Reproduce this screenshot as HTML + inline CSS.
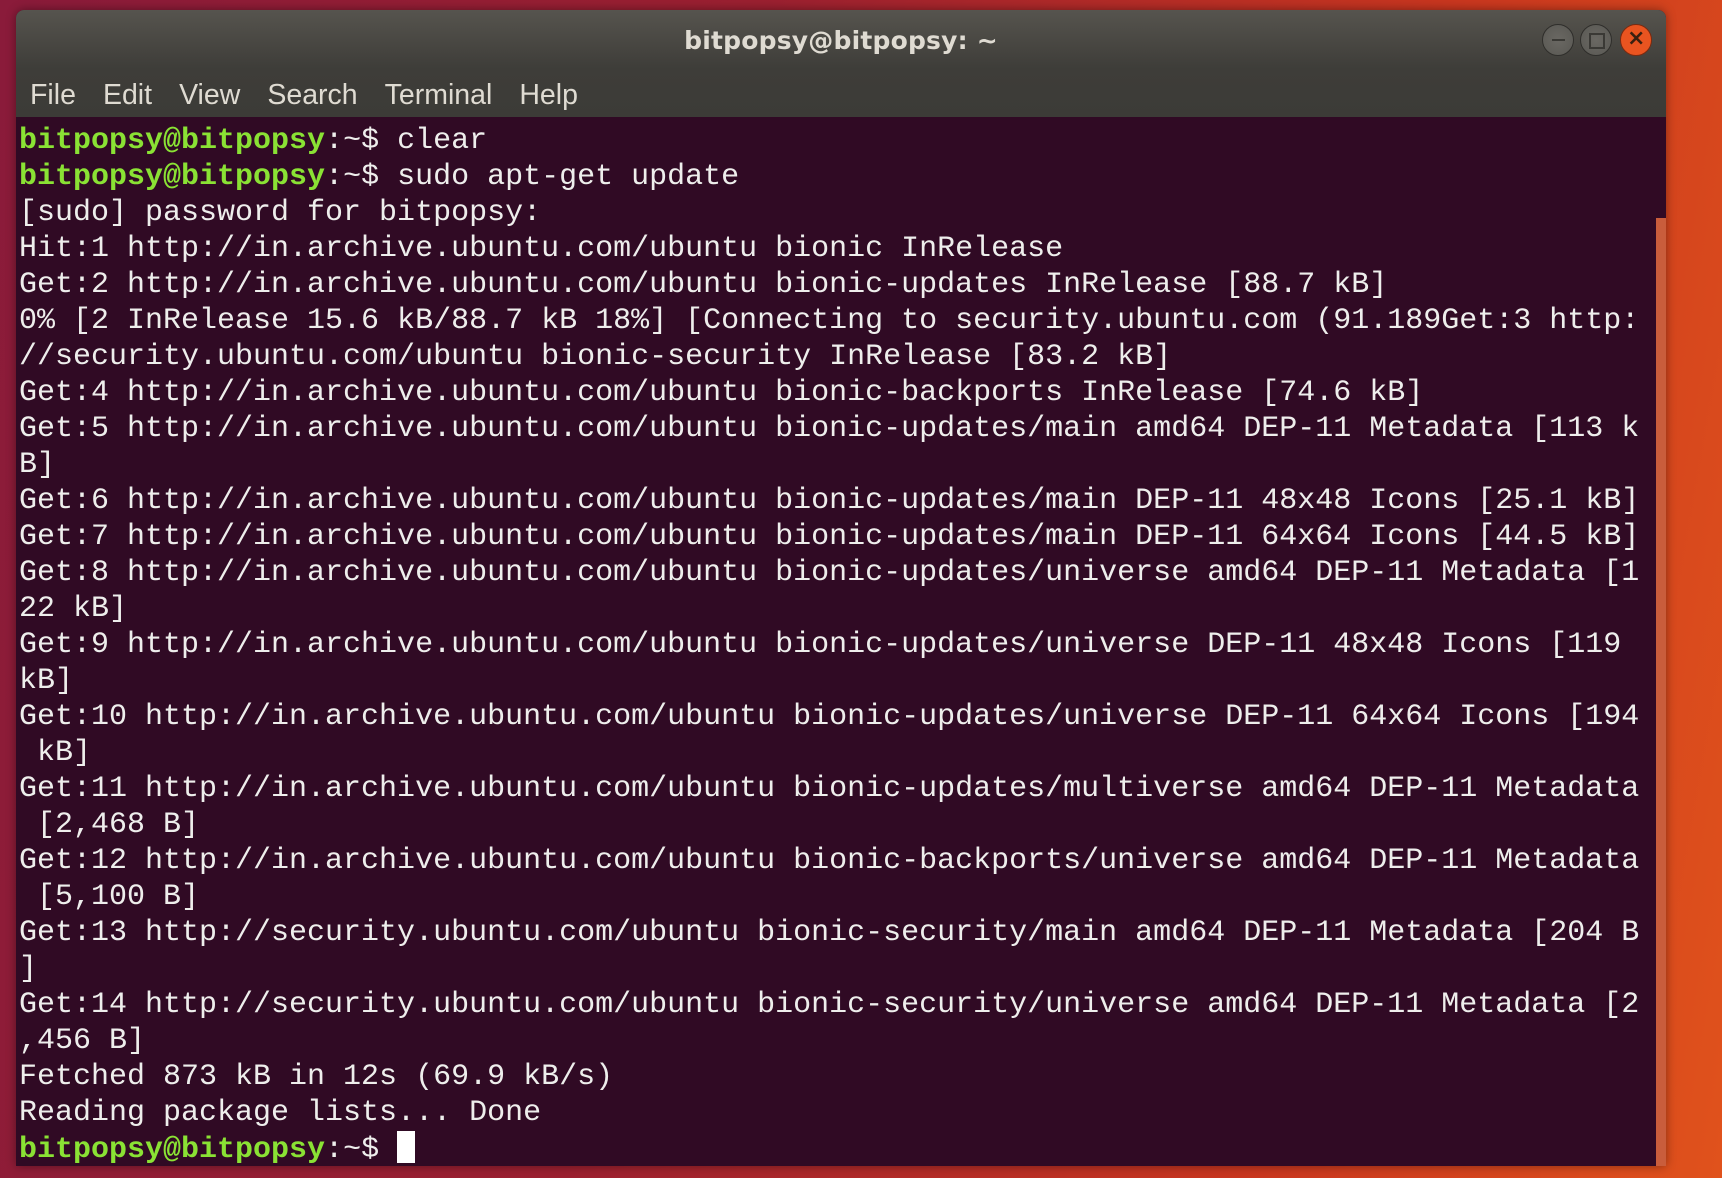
<!DOCTYPE html>
<html><head><meta charset="utf-8"><style>
html,body{margin:0;padding:0}
body{width:1722px;height:1178px;overflow:hidden;position:relative;
background:linear-gradient(100deg,#8a1b3a 0%,#9b2030 40%,#c8361f 75%,#e0521c 100%);}
.win{position:absolute;left:16px;top:10px;width:1650px;height:1156px;border-radius:8px 8px 0 0;overflow:hidden;background:#300a24;box-shadow:0 0 10px rgba(0,0,0,.4)}
.bar{position:absolute;left:0;top:0;width:100%;height:107px;background:linear-gradient(#56544e,#3e3d39 55%,#3c3b37)}
.title{position:absolute;left:0;right:0;top:16px;text-align:center;font:bold 25px "DejaVu Sans","Liberation Sans",sans-serif;color:#dfdbd2;letter-spacing:0.2px}
.menu{position:absolute;left:14px;top:69px;font:28.5px "Liberation Sans",sans-serif;color:#dfdbd2}
.menu span{margin-right:27px}
.btn{position:absolute;top:14px;width:32px;height:32px;border-radius:50%;background:radial-gradient(#6a6863,#595853);border:1px solid #2f2e2b;box-sizing:border-box}
.term{position:absolute;left:3px;top:113px;font:30px/36px "Liberation Mono",monospace;color:#eeeeec;white-space:pre}
.g{color:#8ae234;font-weight:bold}
.sb{position:absolute;left:1640px;top:208px;width:10px;height:948px;background:#c95d3c}
.cur{display:inline-block;width:18px;height:32px;background:#fff;vertical-align:-6px}
</style></head><body>
<div class="win">
<div class="bar">
<div class="title">bitpopsy@bitpopsy: ~</div>
<div class="menu"><span>File</span><span>Edit</span><span>View</span><span>Search</span><span>Terminal</span><span>Help</span></div>
<div class="btn" style="left:1526px"><div style="position:absolute;left:9px;top:14px;width:13px;height:2px;background:#3a3935"></div></div>
<div class="btn" style="left:1564px"><div style="position:absolute;left:8px;top:8px;width:12px;height:12px;border:2px solid #3a3935"></div></div>
<div class="btn" style="left:1604px;background:#e95420;border-color:#7a2a10"><div style="position:absolute;left:6px;top:1px;font:bold 22px 'DejaVu Sans',sans-serif;color:#3a2010">×</div></div>
</div>
<div class="term"><span class="g">bitpopsy@bitpopsy</span>:~$ clear
<span class="g">bitpopsy@bitpopsy</span>:~$ sudo apt-get update
[sudo] password for bitpopsy: 
Hit:1 http://in.archive.ubuntu.com/ubuntu bionic InRelease
Get:2 http://in.archive.ubuntu.com/ubuntu bionic-updates InRelease [88.7 kB]
0% [2 InRelease 15.6 kB/88.7 kB 18%] [Connecting to security.ubuntu.com (91.189Get:3 http:
//security.ubuntu.com/ubuntu bionic-security InRelease [83.2 kB]
Get:4 http://in.archive.ubuntu.com/ubuntu bionic-backports InRelease [74.6 kB]
Get:5 http://in.archive.ubuntu.com/ubuntu bionic-updates/main amd64 DEP-11 Metadata [113 k
B]
Get:6 http://in.archive.ubuntu.com/ubuntu bionic-updates/main DEP-11 48x48 Icons [25.1 kB]
Get:7 http://in.archive.ubuntu.com/ubuntu bionic-updates/main DEP-11 64x64 Icons [44.5 kB]
Get:8 http://in.archive.ubuntu.com/ubuntu bionic-updates/universe amd64 DEP-11 Metadata [1
22 kB]
Get:9 http://in.archive.ubuntu.com/ubuntu bionic-updates/universe DEP-11 48x48 Icons [119 
kB]
Get:10 http://in.archive.ubuntu.com/ubuntu bionic-updates/universe DEP-11 64x64 Icons [194
 kB]
Get:11 http://in.archive.ubuntu.com/ubuntu bionic-updates/multiverse amd64 DEP-11 Metadata
 [2,468 B]
Get:12 http://in.archive.ubuntu.com/ubuntu bionic-backports/universe amd64 DEP-11 Metadata
 [5,100 B]
Get:13 http://security.ubuntu.com/ubuntu bionic-security/main amd64 DEP-11 Metadata [204 B
]
Get:14 http://security.ubuntu.com/ubuntu bionic-security/universe amd64 DEP-11 Metadata [2
,456 B]
Fetched 873 kB in 12s (69.9 kB/s)
Reading package lists... Done
<span class="g">bitpopsy@bitpopsy</span>:~$ <span class="cur"></span></div>
<div class="sb"></div>
</div>
</body></html>
